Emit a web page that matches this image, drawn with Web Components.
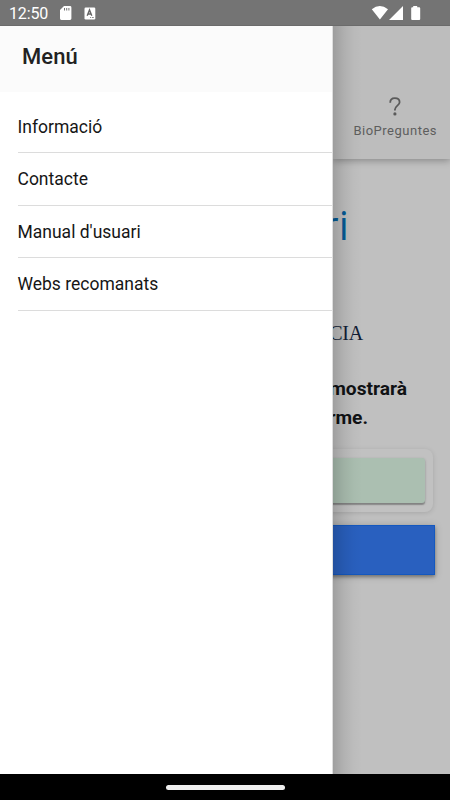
<!DOCTYPE html>
<html lang="ca">
<head>
<meta charset="utf-8">
<title>Menú</title>
<style>
html,body{margin:0;height:100%;overflow:hidden}
body{font-family:Roboto,"Noto Sans",sans-serif;background:#000}
</style>
</head>
<body>
<bio-app></bio-app>
<script>
function define(name, html) {
  const tpl = document.createElement('template');
  tpl.innerHTML = html;
  customElements.define(name, class extends HTMLElement {
    constructor() {
      super();
      this.attachShadow({mode: 'open'}).append(tpl.content.cloneNode(true));
    }
  });
}

define('status-bar', `<style>
:host{display:flex;align-items:center;height:26px;box-sizing:border-box;padding:0 29.5px 0 9px;background:#747474;color:#fff;font-size:16px;line-height:26px;box-shadow:inset 0 -1px #6b6b6b}
span{letter-spacing:-.15px;width:50px;padding-top:1px}
svg{display:block;flex:none}
.sp{flex:1}
</style>
<span>12:50</span>
<svg width="13" height="16" viewBox="0 0 13 16"><path fill="#fff" fill-rule="evenodd" d="M5 1h6a1.400 1.400 0 0 1 1.400 1.400v11.200a1.400 1.400 0 0 1-1.400 1.400H2.400A1.400 1.400 0 0 1 1 13.600V5zM5 3v2.500h1V3zM7.200 3v2.500h1V3zM9.400 3v2.500h1V3z"/></svg>
<svg width="12" height="13" viewBox="0 0 12 13" style="margin-left:12px"><rect x=".5" y=".5" width="10.800" height="12" rx="1.200" fill="#fff"/><path d="M3.200 8.800 5.500 3 7.800 8.800M4 7h3" fill="none" stroke="#666" stroke-width="1.400"/><path d="M6 10.500h1M7.800 10.500h2" stroke="#747474" stroke-width=".8"/></svg>
<div class="sp"></div>
<svg width="50" height="16" viewBox="0 0 50 16"><path fill="#fff" d="M.8 4.300Q8.800-2.200 17 4.300L8.900 14.500zM32 1v14H18zM42.200 2.300V1h4v1.300h2q1 0 1 1v10.700q0 1-1 1h-7q-1 0-1-1V3.300q0-1 1-1z"/></svg>`);

define('nav-pill', `<style>
:host{display:flex;justify-content:center;align-items:center;height:26px;background:#000}
i{width:119px;height:5px;border-radius:3px;background:#eee}
</style><i></i>`);

define('menu-item', `<style>
:host{display:flex;align-items:center;box-sizing:border-box;height:52.500px;margin-left:17.500px;border-bottom:1px solid #dcdcdc;color:#161616;font-size:17.500px;line-height:24px}
</style><slot></slot>`);

define('side-menu', `<style>
:host{display:block;background:#fff;box-sizing:border-box;border-right:1px solid #dedede}
header{height:66px;box-sizing:border-box;padding:0 0 5px 22px;display:flex;align-items:center;background:#fbfbfb;color:#222;font-size:22px;font-weight:500;letter-spacing:.1px}
nav{padding-top:8.800px}
</style>
<header>Menú</header>
<nav><menu-item>Informació</menu-item><menu-item>Contacte</menu-item><menu-item>Manual d'usuari</menu-item><menu-item>Webs recomanats</menu-item></nav>`);

define('tab-button', `<style>
:host{display:flex;flex-direction:column;align-items:center;color:#5e5e5e;font-size:13px;letter-spacing:.5px;line-height:16px;white-space:nowrap}
svg{display:block;margin-bottom:7px}
</style>
<svg width="12" height="19" viewBox="0 0 12 19"><path d="M1.200 5.700C1.200 2.500 3 1.100 5.800 1.100S10.600 2.700 10.600 5.200C10.600 8.600 5.900 8.700 5.900 12.700v.7" fill="none" stroke="#5a5a5a" stroke-width="1.800"/><circle cx="5.900" cy="16.900" r="1.600" fill="#5a5a5a"/></svg><slot></slot>`);

define('content-card', `<style>
:host{display:block;box-sizing:border-box;flex:none;height:63px;margin:17px 17px 0 -20px;padding:9px 8.500px 9px 0;border-radius:8px;background:#c1c1c1;box-shadow:0 1px 5px rgba(0,0,0,.13)}
div{height:45px;border-radius:3px;background:#abbfb1;box-shadow:0 2px 1px rgba(0,0,0,.22),0 1px 3px rgba(0,0,0,.2)}
</style><div></div>`);

define('primary-button', `<style>
:host{display:block;box-sizing:border-box;flex:none;height:50.500px;margin:13px 15px 0 -20px;background:#2960bf;border:1px solid #1458bf;box-shadow:0 2px 3px rgba(0,0,0,.3),0 1px 8px rgba(0,0,0,.2)}
</style>`);

define('page-view', `<style>
:host{display:flex;flex-direction:column;overflow:hidden;position:relative;background:#c0c0c0}
:host::after{content:"";position:absolute;inset:0 auto 0 0;width:29px;background:linear-gradient(90deg,rgba(0,0,0,.17),rgba(0,0,0,.075) 11px,rgba(0,0,0,.02) 21px,transparent)}
.top{height:133px;flex:none;box-sizing:border-box;padding:71px 13px 0 0;display:flex;justify-content:flex-end;background:#bdbdbd;box-shadow:0 2px 7px rgba(0,0,0,.28)}
h1,p{margin:0;display:flex;justify-content:flex-end;white-space:nowrap}
h1{height:48px;line-height:48px;padding-right:101.200px;margin-top:42px;font-family:"Open Sans","Noto Sans",sans-serif;font-size:40px;font-weight:500;color:#045a96}
.logo{font:20px/24px "Liberation Serif",serif;padding-right:87px;margin-top:71.500px;color:#111d35;letter-spacing:-.2px}
.copy{font-size:19.200px;line-height:29px;font-weight:700;color:#101214;margin-top:29px;padding-right:43px}
.copy.two{margin-top:0;padding-right:82px}
</style>
<div class="top"><tab-button>BioPreguntes</tab-button></div>
<h1>ri</h1>
<p class="logo">CIA</p>
<p class="copy">mostrarà</p><p class="copy two">rme.</p>
<content-card></content-card>
<primary-button></primary-button>`);

define('bio-app', `<style>
:host{display:grid;grid-template:26px 748px 26px / 333px 117px;width:450px;height:800px;overflow:hidden}
status-bar,nav-pill{grid-column:1/-1}
</style>
<status-bar></status-bar><side-menu></side-menu><page-view></page-view><nav-pill></nav-pill>`);
</script>
</body>
</html>
